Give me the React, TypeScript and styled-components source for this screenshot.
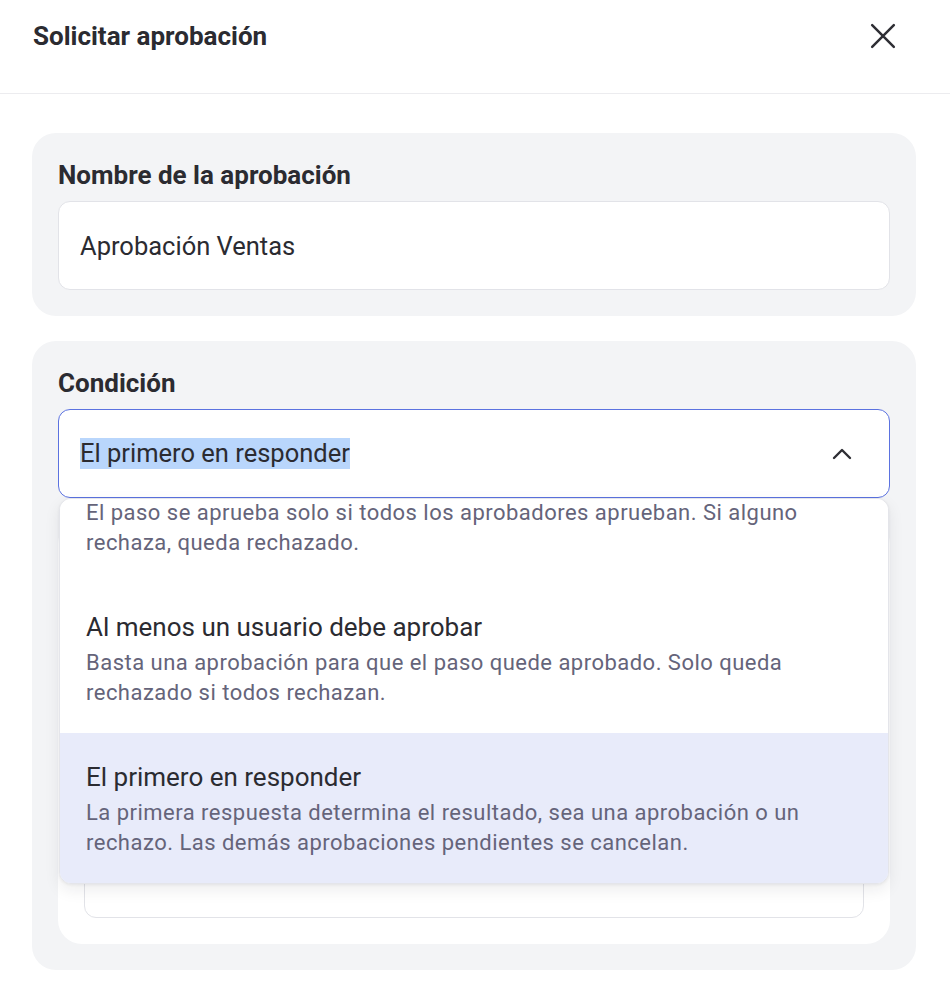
import React, { useLayoutEffect, useRef } from "react";
import styled, { createGlobalStyle } from "styled-components";

const GlobalStyle = createGlobalStyle`
  html, body { margin: 0; padding: 0; background: #ffffff; }
  body { font-family: Roboto, "Noto Sans", "Liberation Sans", sans-serif; color: #2b2b31; }
  * { box-sizing: border-box; }
`;

const Page = styled.div`
  width: 950px;
  min-height: 1000px;
  background: #fff;
`;

const Header = styled.header`
  height: 94px;
  display: flex;
  align-items: center;
  justify-content: space-between;
  padding: 0 50px 21px 33px;
  border-bottom: 1px solid #ececef;
`;

const Title = styled.h1`
  margin: 0;
  font-size: 26px;
  line-height: 32px;
  font-weight: 700;
  color: #2b2b31;
`;

const CloseButton = styled.button`
  border: 0;
  background: transparent;
  padding: 0;
  width: 34px;
  height: 34px;
  display: flex;
  align-items: center;
  justify-content: center;
  color: #2e2e34;
  cursor: pointer;
`;

const Body = styled.main`
  padding: 39px 34px 0 32px;
  display: flex;
  flex-direction: column;
  gap: 25px;
`;

const Card = styled.section`
  background: #f3f4f6;
  border-radius: 24px;
  padding: 26px;
`;

const Label = styled.div`
  font-size: 26px;
  line-height: 32px;
  font-weight: 700;
  color: #2b2b31;
  margin-bottom: 10px;
`;

const Field = styled.div<{ $focused?: boolean }>`
  position: relative;
  height: 89px;
  background: #fff;
  border: 1px solid ${(p) => (p.$focused ? "#5b72e0" : "#e2e3e8")};
  border-radius: 12px;
  display: flex;
  align-items: center;
  justify-content: space-between;
  padding: 0 37px 0 21px;
  font-size: 25.5px;
  color: #2b2b31;
`;

const Selected = styled.span`
  background: #b9d6fc;
  line-height: 31px;
`;

const Inner = styled.div`
  margin-top: 22px;
  height: 424px;
  background: #fff;
  border-radius: 24px;
  padding: 26px;
  display: flex;
  flex-direction: column;
  justify-content: flex-end;
`;

const InnerInput = styled.div`
  height: 89px;
  border: 1px solid #e2e3e8;
  border-radius: 12px;
  background: #fff;
`;

const Menu = styled.div`
  position: absolute;
  top: calc(100% + 1px);
  left: 0;
  right: 0;
  height: 386px;
  background: #fff;
  border: 1px solid #e4e5ea;
  border-radius: 12px;
  box-shadow: 0 6px 16px rgba(20, 20, 40, 0.08), 0 1px 3px rgba(20, 20, 40, 0.06);
  overflow: hidden;
  z-index: 10;
`;

const MenuScroll = styled.div`
  height: 100%;
  overflow-y: auto;
  scrollbar-width: none;
  &::-webkit-scrollbar { display: none; }
`;

const Option = styled.div<{ $active?: boolean }>`
  padding: 28px 42px 25px 26px;
  background: ${(p) => (p.$active ? "#e8ebfa" : "#fff")};
`;

const OptionTitle = styled.div`
  font-size: 26px;
  line-height: 32px;
  color: #2b2b31;
  margin-bottom: 5px;
`;

const OptionDesc = styled.div`
  font-size: 22px;
  line-height: 30px;
  letter-spacing: 0.48px;
  color: #65647a;
`;

const options = [
  {
    title: "Todos los usuarios deben aprobar",
    desc: "El paso se aprueba solo si todos los aprobadores aprueban. Si alguno rechaza, queda rechazado.",
  },
  {
    title: "Al menos un usuario debe aprobar",
    desc: "Basta una aprobación para que el paso quede aprobado. Solo queda rechazado si todos rechazan.",
  },
  {
    title: "El primero en responder",
    desc: "La primera respuesta determina el resultado, sea una aprobación o un rechazo. Las demás aprobaciones pendientes se cancelan.",
  },
];

export default function App() {
  const scrollRef = useRef<HTMLDivElement>(null);
  useLayoutEffect(() => {
    if (scrollRef.current) scrollRef.current.scrollTop = scrollRef.current.scrollHeight;
  }, []);

  return (
    <Page>
      <GlobalStyle />
      <Header>
        <Title>Solicitar aprobación</Title>
        <CloseButton aria-label="Cerrar">
          <svg width="26" height="26" viewBox="0 0 24 24" fill="none" stroke="currentColor" strokeWidth="2.3" strokeLinecap="round">
            <path d="M2 2 L22 22 M22 2 L2 22" />
          </svg>
        </CloseButton>
      </Header>
      <Body>
        <Card>
          <Label>Nombre de la aprobación</Label>
          <Field>Aprobación Ventas</Field>
        </Card>
        <Card>
          <Label>Condición</Label>
          <Field $focused>
            <Selected>El primero en responder</Selected>
            <svg width="20" height="12" viewBox="0 0 20 12" fill="none" stroke="#2e2e34" strokeWidth="2.4" strokeLinecap="round" strokeLinejoin="round">
              <path d="M2 10 L10 2 L18 10" />
            </svg>
            <Menu>
              <MenuScroll ref={scrollRef}>
                {options.map((o, i) => (
                  <Option key={o.title} $active={i === 2}>
                    <OptionTitle>{o.title}</OptionTitle>
                    <OptionDesc>{o.desc}</OptionDesc>
                  </Option>
                ))}
              </MenuScroll>
            </Menu>
          </Field>
          <Inner>
            <InnerInput />
          </Inner>
        </Card>
      </Body>
    </Page>
  );
}
